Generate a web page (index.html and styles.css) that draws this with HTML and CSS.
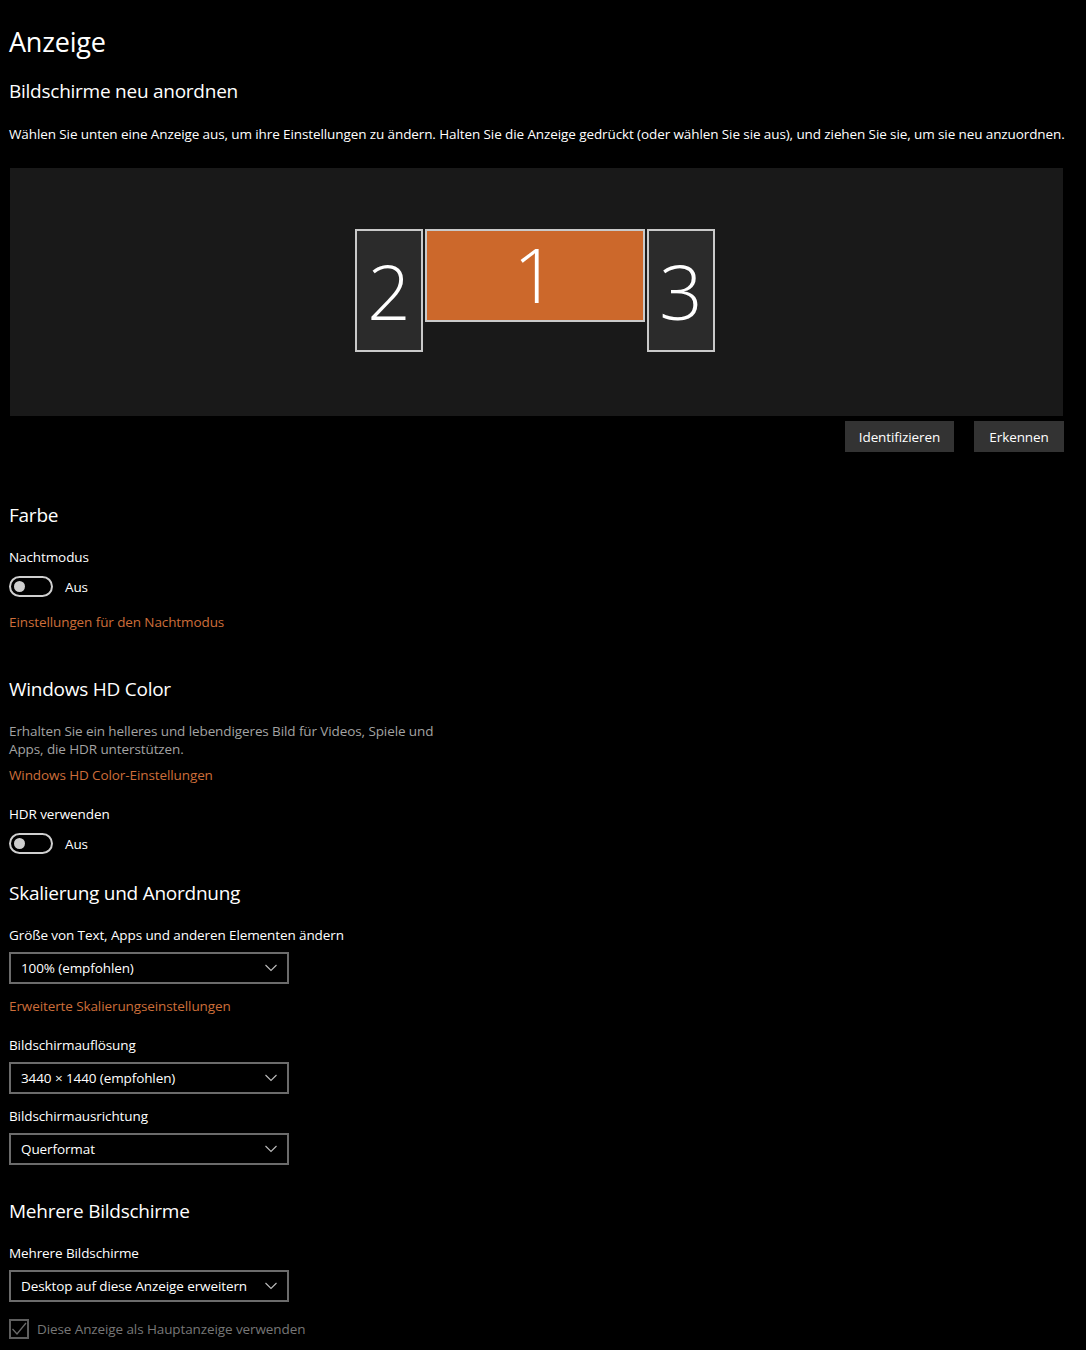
FILE: index.html
```html
<!DOCTYPE html>
<html lang="de">
<head>
<meta charset="utf-8">
<title>Anzeige</title>
<link rel="stylesheet" href="styles.css">
</head>
<body>
<main class="page">
  <h1 class="title">Anzeige</h1>
  <h2 class="heading heading-first">Bildschirme neu anordnen</h2>
  <p class="text desc-wide">Wählen Sie unten eine Anzeige aus, um ihre Einstellungen zu ändern. Halten Sie die Anzeige gedrückt (oder wählen Sie sie aus), und ziehen Sie sie, um sie neu anzuordnen.</p>

  <div class="arrangement">
    <div class="monitor side">2</div>
    <div class="monitor main">1</div>
    <div class="monitor side">3</div>
  </div>
  <div class="actions">
    <button class="btn btn-identify">Identifizieren</button>
    <button class="btn btn-detect">Erkennen</button>
  </div>

  <h2 class="heading heading-farbe">Farbe</h2>
  <div class="text label label-night">Nachtmodus</div>
  <div class="toggle-row">
    <span class="toggle"><span class="knob"></span></span>
    <span class="toggle-text">Aus</span>
  </div>
  <a class="link link-night">Einstellungen für den Nachtmodus</a>

  <h2 class="heading heading-hd">Windows HD Color</h2>
  <p class="muted">Erhalten Sie ein helleres und lebendigeres Bild für Videos, Spiele und Apps, die HDR unterstützen.</p>
  <a class="link link-hd">Windows HD Color-Einstellungen</a>
  <div class="text label label-hdr">HDR verwenden</div>
  <div class="toggle-row">
    <span class="toggle"><span class="knob"></span></span>
    <span class="toggle-text">Aus</span>
  </div>

  <h2 class="heading heading-scale">Skalierung und Anordnung</h2>
  <div class="text label label-size">Größe von Text, Apps und anderen Elementen ändern</div>
  <div class="select">
    <span>100% (empfohlen)</span>
    <svg class="chev" width="14" height="8" viewBox="0 0 14 8"><path d="M1.5 1 L7 6.5 L12.5 1" fill="none" stroke="#bdbdbd" stroke-width="1.1"/></svg>
  </div>
  <a class="link link-scale">Erweiterte Skalierungseinstellungen</a>
  <div class="text label label-res">Bildschirmauflösung</div>
  <div class="select">
    <span>3440 × 1440 (empfohlen)</span>
    <svg class="chev" width="14" height="8" viewBox="0 0 14 8"><path d="M1.5 1 L7 6.5 L12.5 1" fill="none" stroke="#bdbdbd" stroke-width="1.1"/></svg>
  </div>
  <div class="text label label-orient">Bildschirmausrichtung</div>
  <div class="select">
    <span>Querformat</span>
    <svg class="chev" width="14" height="8" viewBox="0 0 14 8"><path d="M1.5 1 L7 6.5 L12.5 1" fill="none" stroke="#bdbdbd" stroke-width="1.1"/></svg>
  </div>

  <h2 class="heading heading-multi">Mehrere Bildschirme</h2>
  <div class="text label label-multi">Mehrere Bildschirme</div>
  <div class="select">
    <span>Desktop auf diese Anzeige erweitern</span>
    <svg class="chev" width="14" height="8" viewBox="0 0 14 8"><path d="M1.5 1 L7 6.5 L12.5 1" fill="none" stroke="#bdbdbd" stroke-width="1.1"/></svg>
  </div>
  <div class="check-row">
    <span class="checkbox">
      <svg width="16" height="16" viewBox="0 0 16 16"><path d="M1.5 8 L6 13 L15 2" fill="none" stroke="#6a6a6a" stroke-width="1.3"/></svg>
    </span>
    <span class="check-text">Diese Anzeige als Hauptanzeige verwenden</span>
  </div>
</main>
</body>
</html>
```

FILE: styles.css
```css
* { box-sizing: border-box; }

html, body {
  margin: 0;
  padding: 0;
  background: #000;
}

body {
  font-family: "Open Sans", "Noto Sans", "Liberation Sans", sans-serif;
  color: #fff;
  font-size: 14px;
}

.page {
  display: flex;
  flex-direction: column;
  align-items: flex-start;
  padding: 0 22px 0 9px;
  width: 1086px;
}

.title {
  margin: 24px 0 0;
  font-size: 27px;
  line-height: 36px;
  font-weight: 400;
  letter-spacing: -0.2px;
}

.heading {
  margin: 0;
  font-size: 19px;
  line-height: 28px;
  font-weight: 400;
  letter-spacing: -0.25px;
}

.heading-first { margin-top: 17px; }
.heading-farbe { margin-top: 49px; }
.heading-hd { margin-top: 43px; }
.heading-scale { margin-top: 25px; }
.heading-multi { margin-top: 32px; }

.text {
  font-size: 13.5px;
  line-height: 20px;
  letter-spacing: -0.1px;
}

.desc-wide {
  margin: 19px 0 0;
  white-space: nowrap;
}

.arrangement {
  margin: 24px 0 0 1px;
  width: 1053px;
  height: 248px;
  background: #191919;
  display: flex;
  justify-content: center;
  align-items: flex-start;
  gap: 2px;
  padding-top: 61px;
  padding-right: 3px;
}

.monitor {
  border: 2px solid #c9c9c9;
  display: flex;
  align-items: center;
  justify-content: center;
  font-weight: 300;
  font-size: 76px;
  line-height: 1;
  color: #fff;
}

.monitor.side {
  width: 68px;
  height: 123px;
  background: #2b2b2b;
}

.monitor.main {
  width: 220px;
  height: 93px;
  background: #cc682b;
  padding-bottom: 4px;
}

.actions {
  align-self: stretch;
  display: flex;
  justify-content: flex-end;
  gap: 20px;
  margin-top: 5px;
}

.btn {
  height: 31px;
  background: #333333;
  color: #fff;
  border: none;
  font-family: inherit;
  font-size: 13.5px;
  letter-spacing: -0.1px;
  padding: 0;
}

.btn-identify { width: 109px; }
.btn-detect { width: 90px; }

.label-night { margin-top: 18px; }
.label-hdr { margin-top: 19px; }
.label-size { margin-top: 18px; }
.label-res { margin-top: 19px; }
.label-orient { margin-top: 12px; }
.label-multi { margin-top: 18px; }

.toggle-row {
  display: flex;
  align-items: center;
  gap: 12px;
  margin-top: 9px;
  height: 21px;
}

.toggle {
  width: 44px;
  height: 21px;
  border: 2px solid #cfcfcf;
  border-radius: 11px;
  display: flex;
  align-items: center;
  padding-left: 3px;
}

.knob {
  width: 11px;
  height: 11px;
  border-radius: 50%;
  background: #cfcfcf;
}

.toggle-text {
  font-size: 13.5px;
  letter-spacing: -0.1px;
}

.link {
  color: #cd6e3a;
  font-size: 13.5px;
  line-height: 20px;
  letter-spacing: -0.1px;
  text-decoration: none;
}

.link-night { margin-top: 15px; }
.link-hd { margin-top: 7px; }
.link-scale { margin-top: 12px; }

.muted {
  margin: 19px 0 0;
  width: 440px;
  color: #a3a3a3;
  font-size: 13.5px;
  line-height: 18px;
  letter-spacing: -0.1px;
}

.select {
  margin-top: 7px;
  width: 280px;
  height: 32px;
  border: 2px solid #6b6b6b;
  display: flex;
  align-items: center;
  justify-content: space-between;
  padding: 0 9px 0 10px;
  font-size: 13.5px;
  letter-spacing: -0.1px;
}

.chev { display: block; }

.check-row {
  display: flex;
  align-items: center;
  gap: 8px;
  margin-top: 17px;
}

.checkbox {
  width: 20px;
  height: 20px;
  border: 2px solid #5e5e5e;
  display: flex;
  align-items: center;
  justify-content: center;
}

.check-text {
  color: #777;
  font-size: 13.5px;
  letter-spacing: -0.1px;
  line-height: 20px;
}
```
